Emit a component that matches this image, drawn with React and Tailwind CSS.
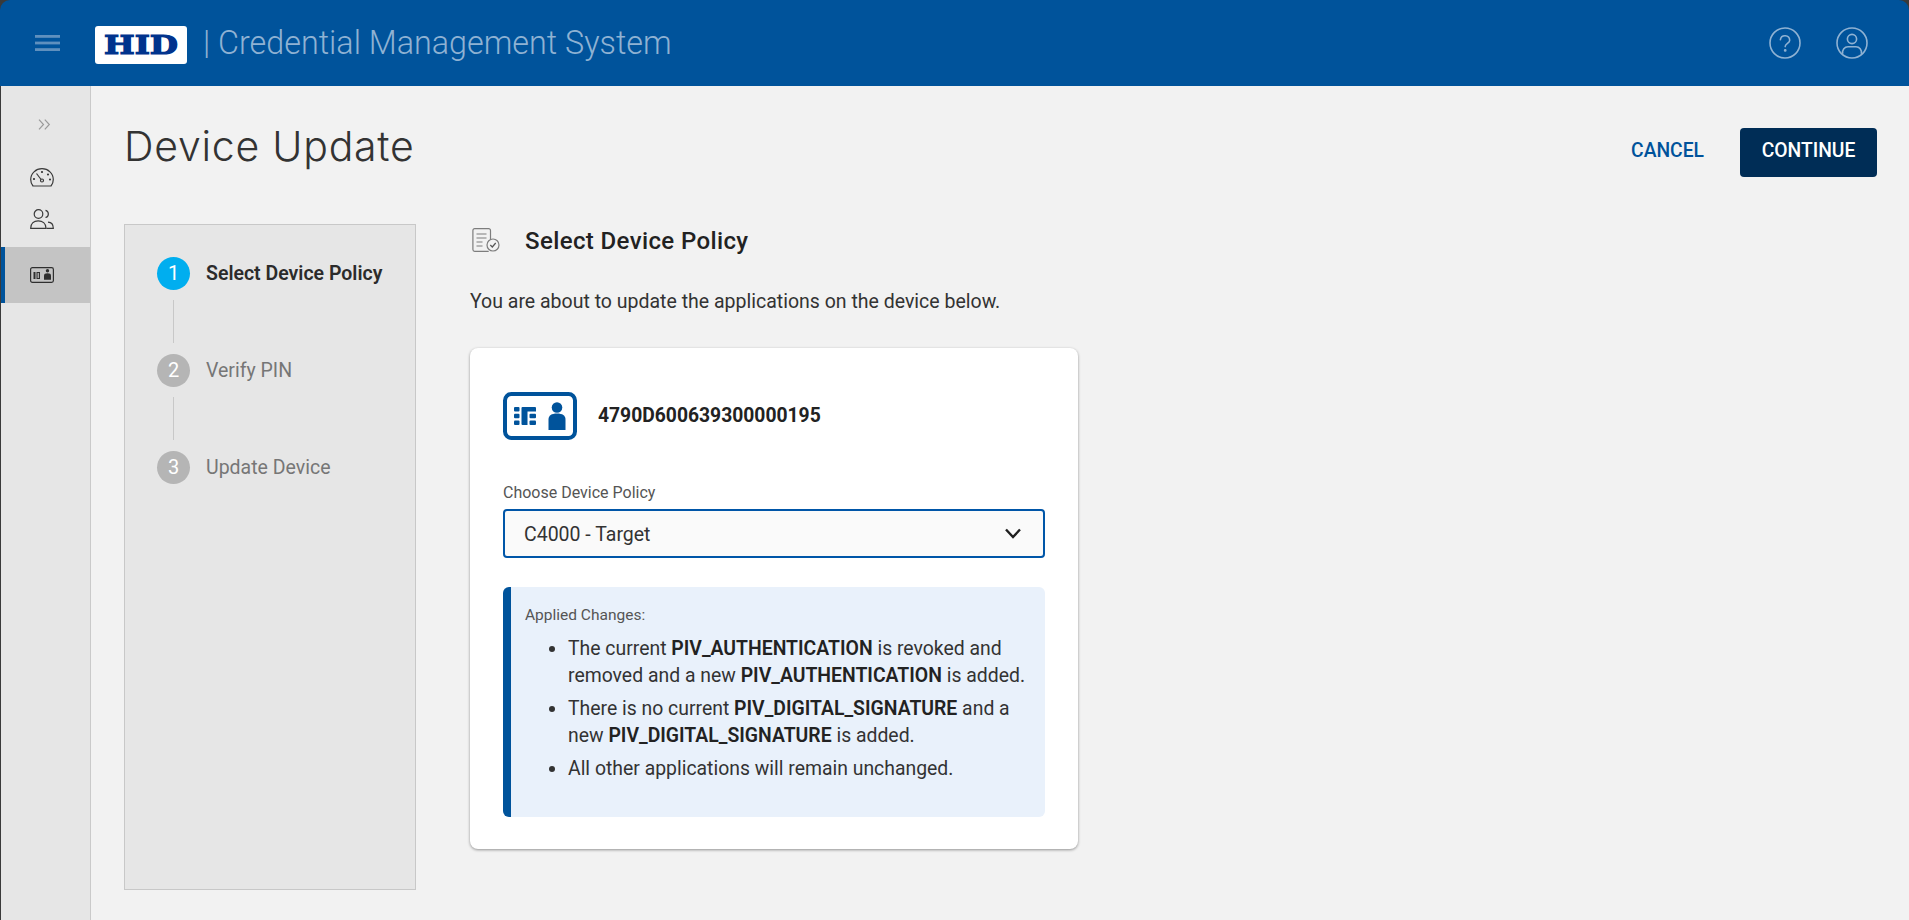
import React from "react";

const Hamburger = () => (
  <svg width="25" height="16" viewBox="0 0 25 16" className="shrink-0">
    <rect y="0" width="25" height="2.8" fill="#5f90be" />
    <rect y="6.6" width="25" height="2.8" fill="#5f90be" />
    <rect y="13.2" width="25" height="2.8" fill="#5f90be" />
  </svg>
);

const Logo = () => (
  <div className="w-[92px] h-[38px] bg-white rounded-[3px] flex items-center justify-center shrink-0">
    <svg width="92" height="38" viewBox="0 0 92 38">
      <text x="9" y="28" textLength="74" lengthAdjust="spacingAndGlyphs" fontFamily="'DejaVu Serif', serif" fontWeight="700" fontSize="26" fill="#00338d" stroke="#00338d" strokeWidth="1.2">HID</text>
    </svg>
  </div>
);

const HelpIcon = () => (
  <svg width="32" height="32" viewBox="0 0 32 32" fill="none" stroke="#8fb2d3" strokeWidth="1.6" strokeLinecap="round">
    <circle cx="16" cy="16" r="15" />
    <path d="M11.4 12.6a4.7 4.7 0 0 1 9.3.6c0 3-4.5 3.4-4.5 6.4" />
    <circle cx="16.2" cy="23.4" r="0.6" fill="#8fb2d3" />
  </svg>
);

const UserIcon = () => (
  <svg width="32" height="32" viewBox="0 0 32 32" fill="none" stroke="#8fb2d3" strokeWidth="1.6">
    <circle cx="16" cy="16" r="15" />
    <circle cx="16" cy="12" r="4.6" />
    <path d="M6.6 26.8c-.6-4 2-7 5.4-7h8c3.4 0 6 3 5.4 7" />
  </svg>
);

const Chevrons = () => (
  <svg width="13" height="11" viewBox="0 0 13 11" fill="none" stroke="#9a9a9a" strokeWidth="1.2">
    <path d="M1 .6l4.5 4.9L1 10.4" />
    <path d="M6.8 .6l4.5 4.9-4.5 4.9" />
  </svg>
);

const Gauge = () => (
  <svg width="24" height="19" viewBox="0 0 24 19" fill="none" stroke="#3a3a3a" strokeWidth="1.2">
    <path d="M3 18h18c1.3-1.6 2.3-4 2.3-6.4C23.3 5.4 18.200.7 12 .7S.7 5.400.7 11.600C.7 14 1.700 16.400 3 18z" />
    <path d="M6.500 5.500l4.600 6" />
    <circle cx="12" cy="12.500" r="1.500" />
    <circle cx="12" cy="4" r=".5" fill="#3a3a3a" />
    <circle cx="18" cy="6.500" r=".5" fill="#3a3a3a" />
    <circle cx="4" cy="11" r=".5" fill="#3a3a3a" />
    <circle cx="20" cy="11.500" r=".5" fill="#3a3a3a" />
  </svg>
);

const Users = () => (
  <svg width="24" height="20" viewBox="0 0 24 20" fill="none" stroke="#3a3a3a" strokeWidth="1.2">
    <circle cx="8.500" cy="5" r="4.300" />
    <path d="M15.500 1.300a3.700 3.700 0 0 1 0 7.200" />
    <path d="M.7 19.300c0-5 3.300-7.500 7.500-7.500s7.800 2.500 7.800 7.500z" />
    <path d="M18 13.200c3.300.2 5.300 2.600 5.300 6.100H16.500" />
  </svg>
);

const SmallCard = () => (
  <svg width="24" height="16" viewBox="0 0 24 16" fill="none">
    <rect x=".6" y=".6" width="22.800" height="14.800" rx="1.800" stroke="#2f2f2f" strokeWidth="1.200" />
    <rect x="3.500" y="5" width="2" height="7" fill="#2f2f2f" />
    <rect x="6.500" y="5" width="3.500" height="7" fill="#2f2f2f" />
    <rect x="7.600" y="6" width="1.200" height="5" fill="#c4c4c4" />
    <circle cx="17.500" cy="3.800" r="1.700" fill="#2f2f2f" />
    <path d="M14 12.800V8.500c0-1.400 1.300-2.300 3.500-2.300s3.500.9 3.500 2.300v4.300z" fill="#2f2f2f" />
  </svg>
);

const PolicyIcon = () => (
  <svg width="28" height="24" viewBox="0 0 28 24" fill="none" stroke="#7d7d7d" strokeWidth="1.200">
    <path d="M18.500 12V2.500c0-1-.8-1.800-1.800-1.800H2.700c-1 0-1.800.8-1.800 1.800v19c0 1 .8 1.800 1.800 1.800h14" />
    <path d="M4.500 6h10M4.500 10h10M4.500 14h6M4.500 18h6" />
    <circle cx="21" cy="17" r="6" />
    <path d="M18.300 17l2 2 3.400-4" stroke="#555" />
  </svg>
);

const DeviceIcon = () => (
  <svg width="74" height="48" viewBox="0 0 74 48" fill="none">
    <rect x="2" y="2" width="70" height="44" rx="6.500" stroke="#00539b" strokeWidth="4" />
    <g fill="#00539b">
      <rect x="11" y="15" width="5.500" height="4.500" rx="1" />
      <rect x="11" y="21.800" width="5.500" height="4.500" rx="1" />
      <rect x="11" y="28.500" width="5.500" height="4.500" rx="1" />
      <path d="M18.500 16a1 1 0 0 1 1-1H32a1 1 0 0 1 1 1v3.500H24.500V33h-5a1 1 0 0 1-1-1z" />
      <rect x="26.500" y="21.800" width="6.500" height="4.500" rx="1" />
      <rect x="26.500" y="28.500" width="6.500" height="4.500" rx="1" />
      <circle cx="54" cy="15.500" r="5.300" />
      <path d="M45.500 38V27.500c0-4 3-6 8.500-6s8.500 2 8.500 6V38z" />
    </g>
  </svg>
);

const Chevron = () => (
  <svg width="16" height="11" viewBox="0 0 16 11" fill="none" stroke="#1f1f1f" strokeWidth="2.400">
    <path d="M1 1.500l7 7.500 7-7.500" />
  </svg>
);

function Step({ n, label, active }) {
  return (
    <div className="flex items-center gap-4 h-8">
      <div className={`w-[33px] h-[33px] rounded-full flex items-center justify-center text-white text-[20px] shrink-0 ${active ? "bg-[#00aeef]" : "bg-[#b5b5b5]"}`}>{n}</div>
      <span className={`text-[19.5px] pt-[2px] ${active ? "font-semibold text-[#2b2b2b]" : "text-[#767676]"}`}>{label}</span>
    </div>
  );
}

const Line = () => <div className="w-px h-[43px] bg-[#c8c8c8] ml-4 my-[11px]" />;

export default function App() {
  return (
    <div className="h-[920px] w-full overflow-hidden bg-[#3a3a3a] pl-px flex flex-col font-['Roboto',sans-serif] text-[#222]">
      <header className="h-[86px] shrink-0 bg-[#00539b] rounded-t-[10px] -ml-px flex items-center pl-[35px] pr-[41px]">
        <Hamburger />
        <div className="ml-[35px] mt-1"><Logo /></div>
        <span className="ml-4 text-[32.3px] font-light text-[#8fb2d3] leading-none font-['Roboto',sans-serif]">| Credential Management System</span>
        <div className="ml-auto flex items-center gap-[35px]">
          <HelpIcon />
          <UserIcon />
        </div>
      </header>
      <div className="flex-1 flex min-h-0 bg-[#f2f2f2]">
        <aside className="w-[90px] shrink-0 bg-[#e6e6e6] border-r border-[#cacaca] flex flex-col">
          <div className="h-[82px] shrink-0 flex items-start justify-center pt-[33px] pr-[2px]"><Chevrons /></div>
          <div className="h-[41px] shrink-0 flex items-start justify-center pr-2"><Gauge /></div>
          <div className="h-[38px] shrink-0 flex items-start justify-center pr-2"><Users /></div>
          <div className="h-[56px] shrink-0 bg-[#c4c4c4] border-l-[4px] border-[#00539b] flex items-center justify-center pr-3"><SmallCard /></div>
        </aside>
        <main className="flex-1 min-w-0 pl-[33px] pr-[32px] flex flex-col">
          <div className="flex items-center justify-between mt-[42px] h-[49px] shrink-0">
            <h1 className="text-[41px] font-light text-[#333] leading-none font-['Inter',sans-serif] tracking-[0.75px] -mt-3">Device Update</h1>
            <div className="flex items-center gap-9">
              <button className="text-[19.3px] font-medium text-[#00539b] -mt-[2px]">CANCEL</button>
              <button className="w-[137px] h-[49px] bg-[#002d56] rounded text-white text-[19.3px] font-medium pb-[2px]">CONTINUE</button>
            </div>
          </div>
          <div className="mt-[47px] flex gap-[54px] flex-1 min-h-0 mb-[30px]">
            <div className="w-[292px] shrink-0 bg-[#e6e6e6] border border-[#c8c8c8] pl-8 pt-8">
              <Step n="1" label="Select Device Policy" active />
              <Line />
              <Step n="2" label="Verify PIN" />
              <Line />
              <Step n="3" label="Update Device" />
            </div>
            <section className="w-[608px] shrink-0 pt-1">
              <div className="flex items-center gap-[25px] pl-[2px] h-6">
                <PolicyIcon />
                <h2 className="text-[24px] font-medium text-[#222] tracking-[0.38px] pt-[2px]">Select Device Policy</h2>
              </div>
              <p className="mt-[36px] text-[19.5px] leading-[27px] text-[#333]">You are about to update the applications on the device below.</p>
              <div className="mt-[33px] bg-white rounded-lg shadow-[0_1px_3px_rgba(0,0,0,0.4)] px-[33px] pt-[44px] pb-8">
                <div className="flex items-center gap-[21px]">
                  <DeviceIcon />
                  <span className="text-[19.3px] font-bold text-[#222]">4790D600639300000195</span>
                </div>
                <label className="block mt-[43px] text-base leading-5 text-[#555]">Choose Device Policy</label>
                <div className="mt-[6px] h-[49px] border-2 border-[#0056a8] rounded bg-[#fafafa] flex items-center justify-between pl-5 pr-[22px] text-[19.5px] text-[#333]">
                  <span className="pt-[3px] -ml-px">C4000 - Target</span>
                  <Chevron />
                </div>
                <div className="mt-[29px] h-[230px] bg-[#e9f1fb] border-l-[8px] border-[#00539b] rounded-md pl-[14px] pt-[18px] pr-2">
                  <div className="text-[15.5px] leading-5 text-[#555]">Applied Changes:</div>
                  <ul className="mt-[10px] list-disc pl-[43px] text-[19.4px] leading-[27px] text-[#333] flex flex-col gap-[6px]">
                    <li>The current <b className="font-semibold text-[#222]">PIV_AUTHENTICATION</b> is revoked and removed and a new <b className="font-semibold text-[#222]">PIV_AUTHENTICATION</b> is added.</li>
                    <li>There is no current <b className="font-semibold text-[#222]">PIV_DIGITAL_SIGNATURE</b> and a new <b className="font-semibold text-[#222]">PIV_DIGITAL_SIGNATURE</b> is added.</li>
                    <li>All other applications will remain unchanged.</li>
                  </ul>
                </div>
              </div>
            </section>
          </div>
        </main>
      </div>
    </div>
  );
}
